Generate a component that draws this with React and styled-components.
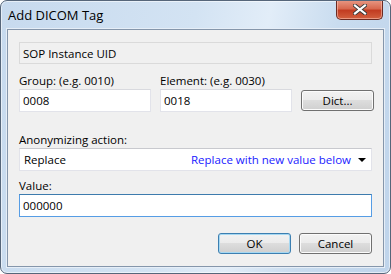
import { createGlobalStyle, styled } from "styled-components";

const GlobalStyle = createGlobalStyle`
  html, body {
    margin: 0;
    padding: 0;
    background: #ffffff;
  }
  * {
    box-sizing: border-box;
  }
`;

const Window = styled.div`
  width: 391px;
  height: 274px;
  border: 1px solid #56667a;
  border-radius: 7px;
  background: linear-gradient(100deg, #c7daee 0%, #d3e3f3 45%, #e2edf8 62%, #c9dcef 78%, #bfd4eb 100%);
  display: flex;
  flex-direction: column;
  padding: 0 6px 6px 6px;
  box-shadow: inset 0 0 0 1px rgba(255, 255, 255, 0.55);
  font-family: "Open Sans", "Noto Sans", sans-serif;
  overflow: hidden;
`;

const TitleBar = styled.div`
  height: 28px;
  display: flex;
  justify-content: space-between;
  align-items: flex-start;
`;

const Caption = styled.div`
  margin-top: 5px;
  margin-left: 1px;
  font-size: 13px;
  color: #000;
`;

const CloseButton = styled.div`
  width: 47px;
  height: 20px;
  margin-right: 1px;
  margin-top: -1px;
  border: 1px solid #6b2a22;
  border-top: none;
  border-radius: 0 0 5px 5px;
  background: linear-gradient(180deg, #e99a86 0%, #d8694f 45%, #c23c22 55%, #d2603f 100%);
  box-shadow: inset 0 0 0 1px rgba(255, 200, 185, 0.55);
  display: flex;
  align-items: center;
  justify-content: center;
`;

const Client = styled.div`
  flex: 1;
  background: #f0f0f0;
  border: 1px solid #8596ab;
  box-shadow: 0 0 0 1px #e6eef7;
  padding: 12px 11px 0 11px;
  display: flex;
  flex-direction: column;
  font-size: 11.5px;
  color: #000;
`;

const ReadOnlyField = styled.div`
  height: 22px;
  border: 1px solid #dadada;
  background: #f0f0f0;
  padding: 0 3px;
  display: flex;
  align-items: center;
`;

const Label = styled.div`
  line-height: 15px;
  margin-top: ${(p) => p.$top || 0}px;
  margin-bottom: 1px;
  white-space: nowrap;
`;

const FieldGrid = styled.div`
  display: grid;
  grid-template-columns: 132px 132px 73px;
  column-gap: 9px;
  margin-top: 9px;
  align-items: end;
`;

const Column = styled.div`
  display: flex;
  flex-direction: column;
`;

const TextBox = styled.div`
  height: 23px;
  background: #fff;
  border: 1px solid ${(p) => (p.$focused ? "#569de5" : "#e2e3ea")};
  border-top-color: ${(p) => (p.$focused ? "#3d7bad" : "#d9dadf")};
  padding: 0 3px;
  display: flex;
  align-items: center;
`;

const Combo = styled.div`
  height: 23px;
  background: #fff;
  border: 1px solid #e2e3ea;
  border-top-color: #c8c9ce;
  display: flex;
  align-items: center;
  padding: 0 5px 0 4px;
`;

const ComboValue = styled.span`
  width: 167px;
  flex: none;
`;

const ComboHint = styled.span`
  flex: 1;
  color: #1a1aff;
`;

const Arrow = styled.span`
  width: 0;
  height: 0;
  border-left: 4px solid transparent;
  border-right: 4px solid transparent;
  border-top: 4px solid #000;
  margin-top: 1px;
`;

const Button = styled.div`
  width: 73px;
  height: 21px;
  border: 1px solid ${(p) => (p.$default ? "#3c7fb1" : "#707070")};
  border-radius: 3px;
  background: linear-gradient(180deg, #f2f2f2 0%, #ebebeb 49%, #dddddd 50%, #cfcfcf 100%);
  box-shadow: inset 0 0 0 1px ${(p) => (p.$default ? "#a6d8f2" : "#fbfbfb")};
  display: flex;
  align-items: center;
  justify-content: center;
  margin-bottom: ${(p) => p.$bottom || 0}px;
`;

const ButtonRow = styled.div`
  display: flex;
  justify-content: flex-end;
  gap: 8px;
  margin-top: 16px;
`;

export default function App() {
  return (
    <>
      <GlobalStyle />
      <Window>
        <TitleBar>
          <Caption>Add DICOM Tag</Caption>
          <CloseButton>
            <svg width="14" height="11" viewBox="0 0 14 11">
              <path
                d="M2 1.5 L12 9.5 M12 1.5 L2 9.5"
                stroke="#3a3a3a"
                strokeWidth="4"
                strokeLinecap="square"
              />
              <path
                d="M2 1.5 L12 9.5 M12 1.5 L2 9.5"
                stroke="#ffffff"
                strokeWidth="2.2"
                strokeLinecap="square"
              />
            </svg>
          </CloseButton>
        </TitleBar>
        <Client>
          <ReadOnlyField>SOP Instance UID</ReadOnlyField>
          <FieldGrid>
            <Column>
              <Label>Group: (e.g. 0010)</Label>
              <TextBox>0008</TextBox>
            </Column>
            <Column>
              <Label>Element: (e.g. 0030)</Label>
              <TextBox>0018</TextBox>
            </Column>
            <Button $bottom={1}>Dict...</Button>
          </FieldGrid>
          <Label $top={20}>Anonymizing action:</Label>
          <Combo>
            <ComboValue>Replace</ComboValue>
            <ComboHint>Replace with new value below</ComboHint>
            <Arrow />
          </Combo>
          <Label $top={7}>Value:</Label>
          <TextBox $focused>000000</TextBox>
          <ButtonRow>
            <Button $default>OK</Button>
            <Button>Cancel</Button>
          </ButtonRow>
        </Client>
      </Window>
    </>
  );
}
